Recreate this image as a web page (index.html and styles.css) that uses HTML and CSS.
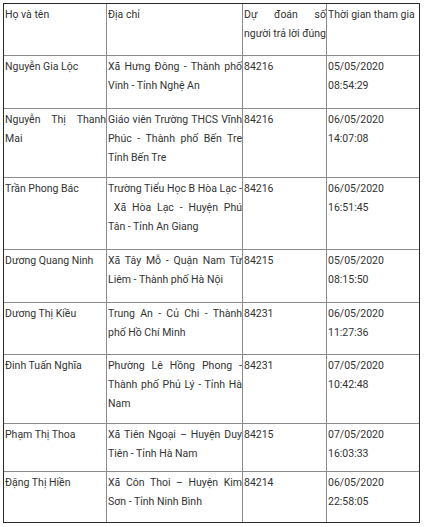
FILE: index.html
```html
<!DOCTYPE html>
<html lang="vi">
<head>
<meta charset="utf-8">
<link rel="stylesheet" href="styles.css">
</head>
<body>
<table class="list">
  <colgroup>
    <col class="c1"><col class="c2"><col class="c3"><col class="c4">
  </colgroup>
  <tr class="h52"><td>Họ và tên</td><td>Địa chỉ</td><td>Dự đoán số người trả lời đúng</td><td>Thời gian tham gia</td></tr>
  <tr class="h53"><td>Nguyễn Gia Lộc</td><td>Xã Hưng Đông - Thành phố Vinh - Tỉnh Nghệ An</td><td>84216</td><td>05/05/2020 08:54:29</td></tr>
  <tr class="h69"><td>Nguyễn Thị Thanh Mai</td><td>Giáo viên Trường THCS Vĩnh Phúc - Thành phố Bến Tre Tỉnh Bến Tre</td><td>84216</td><td>06/05/2020 14:07:08</td></tr>
  <tr class="h72"><td>Trần Phong Bác</td><td>Trường Tiểu Học B Hòa Lạc -&nbsp;Xã Hòa Lạc - Huyện Phú Tân - Tỉnh An Giang</td><td>84216</td><td>06/05/2020 16:51:45</td></tr>
  <tr class="h53"><td>Dương Quang Ninh</td><td>Xã Tây Mỗ - Quận Nam Từ Liêm - Thành phố Hà Nội</td><td>84215</td><td>05/05/2020 08:15:50</td></tr>
  <tr class="h52"><td>Dương Thị Kiều</td><td>Trung An - Củ Chi - Thành phố Hồ Chí Minh</td><td>84231</td><td>06/05/2020 11:27:36</td></tr>
  <tr class="h69"><td>Đinh Tuấn Nghĩa</td><td>Phường Lê Hồng Phong - Thành phố Phủ Lý - Tỉnh Hà Nam</td><td>84231</td><td>07/05/2020 10:42:48</td></tr>
  <tr class="h48"><td>Phạm Thị Thoa</td><td>Xã Tiên Ngoại – Huyện Duy Tiên - Tỉnh Hà Nam</td><td>84215</td><td>07/05/2020 16:03:33</td></tr>
  <tr class="h50 last"><td>Đặng Thị Hiền</td><td>Xã Côn Thoi – Huyện Kim Sơn - Tỉnh Ninh Bình</td><td>84214</td><td>06/05/2020 22:58:05</td></tr>
</table>
</body>
</html>
```
FILE: styles.css
```css
html, body {
  margin: 0;
  padding: 0;
  background: #ffffff;
}
body {
  padding: 3px;
  font-family: Roboto, "Liberation Sans", sans-serif;
  font-size: 10.5px;
  color: #333333;
}
.list {
  width: 417px;
  border: 1px solid #2a2a2a;
  border-spacing: 0;
  table-layout: fixed;
}
.c1 { width: 103px; }
.c2 { width: 136px; }
.c3 { width: 84px; }
.c4 { width: 92px; }
.list td {
  vertical-align: top;
  text-align: justify;
  line-height: 19px;
  padding: 1px 0 0 1px;
  border-right: 1px solid #8c8c8c;
  border-bottom: 1px solid #8c8c8c;
}
.list td:last-child { border-right: none; }
.list tr.last td { border-bottom: none; }
.h48 { height: 48px; }
.h50 { height: 50px; }
.h52 { height: 52px; }
.h53 { height: 53px; }
.h69 { height: 69px; }
.h72 { height: 72px; }
```
